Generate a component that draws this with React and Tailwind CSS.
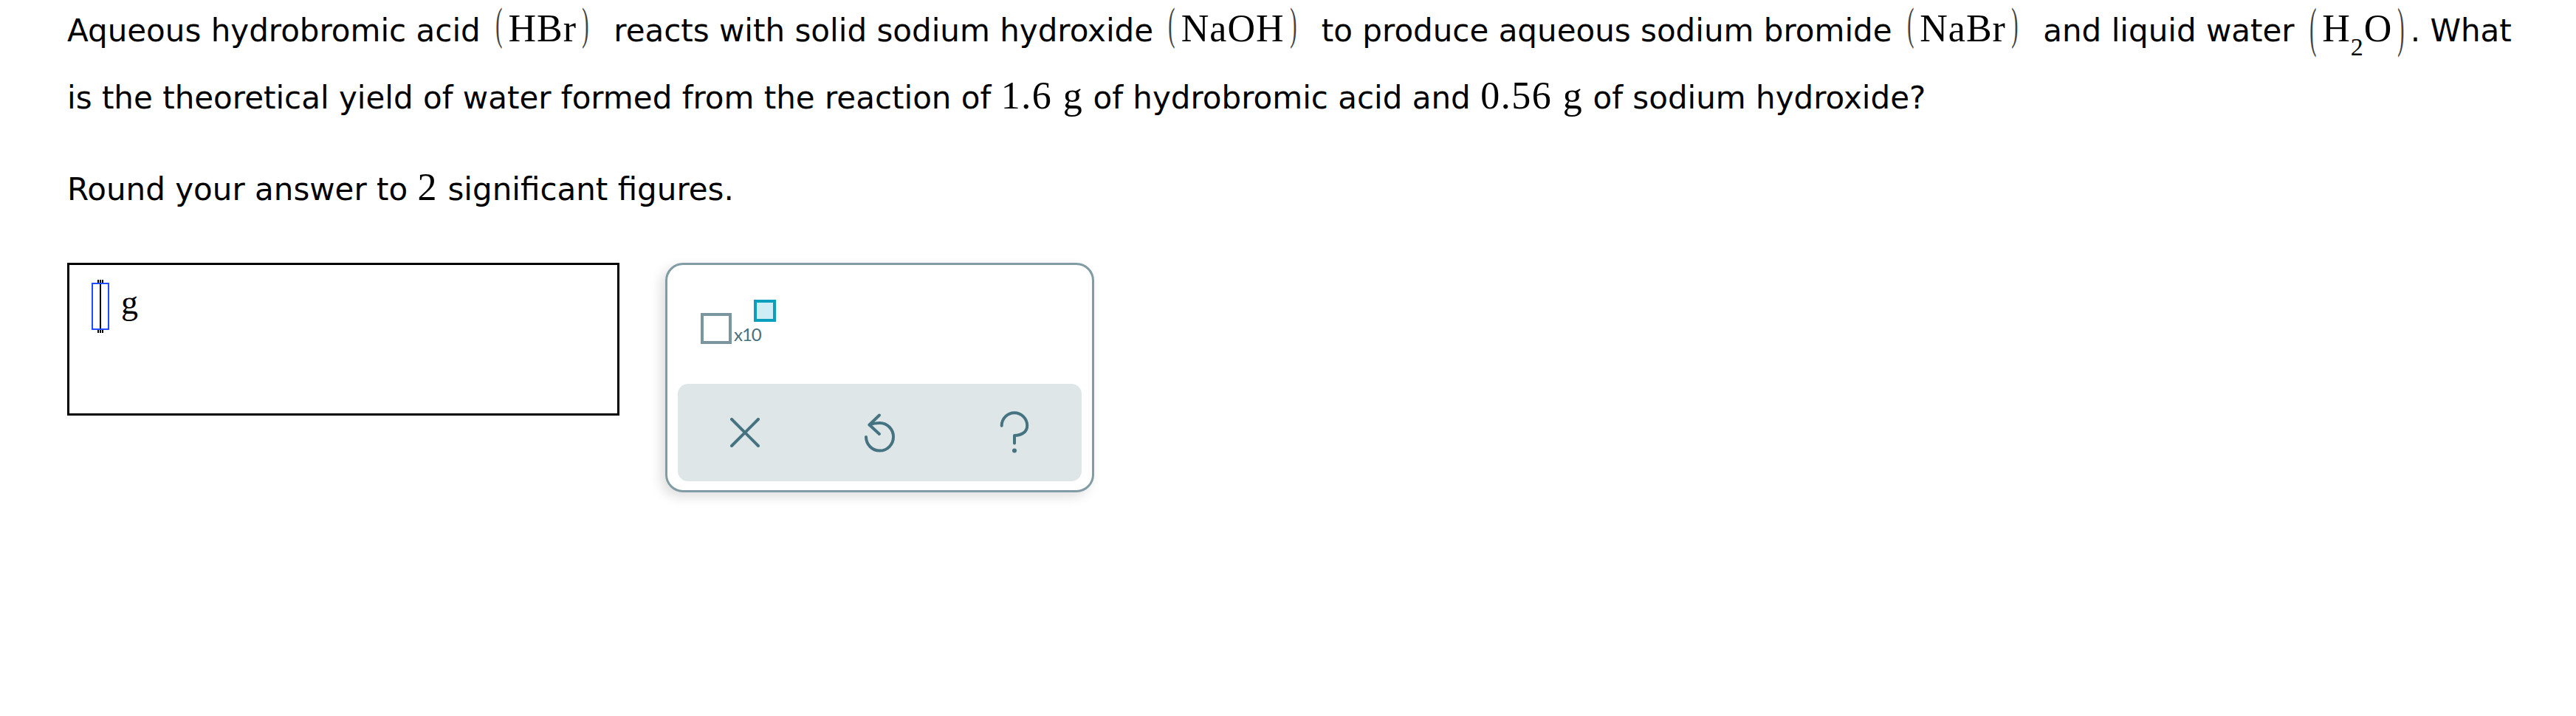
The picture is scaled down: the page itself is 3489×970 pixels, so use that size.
import React from "react";

function LP({ tall }) {
  return (
    <span
      className={
        tall
          ? "inline-block leading-none mx-[4px] text-[46px] text-[#444] [transform:translateY(-3px)_scale(0.6,1.63)]"
          : "inline-block leading-none mx-[4px] text-[46px] text-[#444] [transform:translateY(-8px)_scale(0.6,1.34)]"
      }
    >
      (
    </span>
  );
}
function RP({ tall }) {
  return (
    <span
      className={
        tall
          ? "inline-block leading-none mx-[4px] text-[46px] text-[#444] [transform:translateY(-3px)_scale(0.6,1.63)]"
          : "inline-block leading-none mx-[4px] text-[46px] text-[#444] [transform:translateY(-8px)_scale(0.6,1.34)]"
      }
    >
      )
    </span>
  );
}

function Chem({ children, tall, gapAfter }) {
  return (
    <span
      className={
        gapAfter
          ? "font-['Liberation_Serif','Times_New_Roman',serif] text-[52px] leading-none tracking-[1px] mr-[26px]"
          : "font-['Liberation_Serif','Times_New_Roman',serif] text-[52px] leading-none tracking-[1px]"
      }
    >
      <LP tall={tall} />
      {children}
      <RP tall={tall} />
    </span>
  );
}

function Num({ children }) {
  return (
    <span className="font-['Liberation_Serif','Times_New_Roman',serif] text-[52px] leading-none tracking-[1.5px]">
      {children}
    </span>
  );
}

function XIcon() {
  return (
    <svg width="40" height="40" viewBox="0 0 40 40" fill="none">
      <path
        d="M2 2 L38 38 M38 2 L2 38"
        stroke="#457382"
        strokeWidth="4"
        strokeLinecap="round"
      />
    </svg>
  );
}

function UndoIcon() {
  return (
    <svg width="44" height="60" viewBox="0 0 44 60" fill="none">
      <path
        d="M8.5 19.5 Q15 17 22.5 17 A18.5 18.8 0 1 1 4 36"
        stroke="#457382"
        strokeWidth="4"
        strokeLinecap="round"
        strokeLinejoin="round"
      />
      <path
        d="M22 6.5 L8.5 19.5 L22 32"
        stroke="#457382"
        strokeWidth="4"
        strokeLinecap="round"
        strokeLinejoin="round"
      />
    </svg>
  );
}

function HelpIcon() {
  return (
    <svg width="48" height="62" viewBox="0 0 48 62" fill="none">
      <path
        d="M6.7 21.7 A17.25 17.4 0 0 1 41.2 21.7 C41.2 30 34 35 24 35 L24 45.5"
        stroke="#457382"
        strokeWidth="4"
        strokeLinecap="round"
        strokeLinejoin="round"
      />
      <circle cx="24" cy="55.5" r="3" fill="#457382" />
    </svg>
  );
}

export default function App() {
  return (
    <div className="w-[3489px] h-[970px] bg-white text-black font-['DejaVu_Sans',Verdana,sans-serif] text-[42px]">
      <div className="pl-[91px] flex flex-col items-start">
        <div className="leading-[84px] whitespace-nowrap">
          Aqueous hydrobromic acid <Chem gapAfter>HBr</Chem>reacts with solid
          sodium hydroxide <Chem gapAfter>NaOH</Chem>to produce aqueous sodium
          bromide <Chem gapAfter>NaBr</Chem>and liquid water{" "}
          <Chem tall>
            H<span className="text-[34px] leading-none align-[-19px]">2</span>O
          </Chem>
          . What
        </div>
        <div className="leading-[98px] whitespace-nowrap">
          is the theoretical yield of water formed from the reaction of{" "}
          <Num>1.6 g</Num> of hydrobromic acid and <Num>0.56 g</Num> of sodium
          hydroxide?
        </div>
        <div className="leading-[91px] mt-[29px] whitespace-nowrap">
          Round your answer to <Num>2</Num> significant figures.
        </div>

        <div className="flex items-start gap-[62px] mt-[54px]">
          {/* answer box */}
          <div className="w-[748px] h-[207px] border-[3px] border-black flex items-start pl-[30px] pt-[24px]">
            <div className="relative w-[24px] h-[64px] border-2 border-[#1f4cff] flex justify-center">
              <div className="w-[2px] h-full bg-black" />
              <div className="absolute -top-[6px] left-1/2 -translate-x-1/2 w-[8px] h-[4px] border-t-2 border-b-2 border-dotted border-black" />
              <div className="absolute -bottom-[6px] left-1/2 -translate-x-1/2 w-[8px] h-[4px] border-t-2 border-b-2 border-dotted border-black" />
            </div>
            <span className="ml-[16px] mt-[4px] font-['Liberation_Serif','Times_New_Roman',serif] text-[46px] leading-[46px]">
              g
            </span>
          </div>

          {/* keypad panel */}
          <div className="w-[581px] h-[311px] border-[3px] border-[#819ca4] rounded-[24px] bg-white shadow-[-6px_6px_16px_rgba(0,0,0,0.13)] flex flex-col">
            <div className="h-[161px] pl-[45px] pt-[47px]">
              <div className="relative flex items-end h-[60px]">
                <div className="w-[42px] h-[42px] border-4 border-[#7b969f] bg-white" />
                <span className="ml-[3px] mb-[1px] font-['Lato','Open_Sans',sans-serif] text-[24px] leading-[24px] text-[#46707e] tracking-[-1px]">
                  x10
                </span>
                <div className="absolute left-[72px] top-0 w-[30px] h-[30px] border-4 border-[#0aa0bd] bg-[#cdeef5]" />
              </div>
            </div>
            <div className="mx-[14px] h-[132px] rounded-[14px] bg-[#dfe6e8] grid grid-cols-3 items-center justify-items-center">
              <XIcon />
              <UndoIcon />
              <HelpIcon />
            </div>
          </div>
        </div>
      </div>
    </div>
  );
}
